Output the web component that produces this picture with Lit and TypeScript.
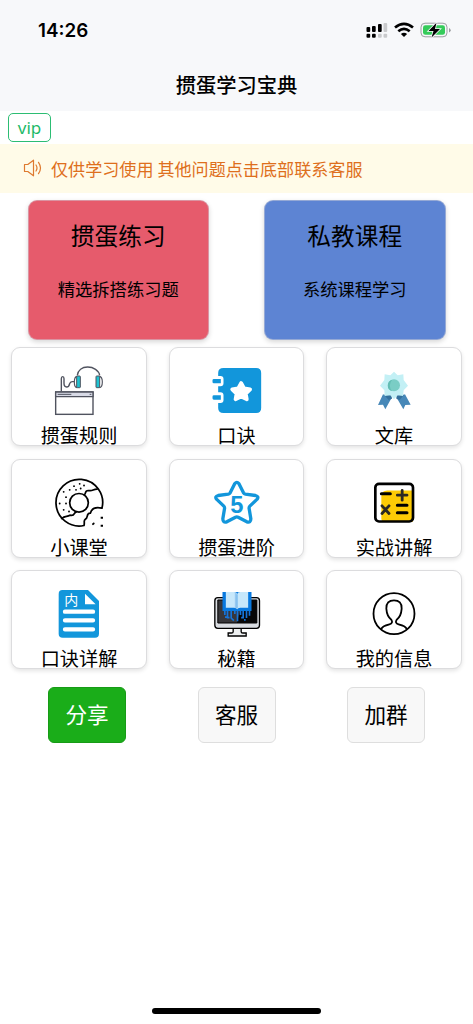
import { LitElement, html, svg, css } from "lit";
import { customElement } from "lit/decorators.js";

const rules = svg`<svg viewBox="153 66 168 168" fill="none" stroke="#50535f" stroke-width="4.2">
  <path d="M184 154V116q0-6 4-6t4 6v14q0 11 8 11 7 0 9-10 2-7 9-6h7"/>
  <path d="M232 106c2-15 14-25 31-25s34 10 36 25"/>
  <path fill="#fff" stroke-width="3.500" d="M231 109q-8 1-8 17t8 17M298 109q9 1 9 17t-9 17"/>
  <rect x="230" y="108" width="11" height="35" rx="2" fill="#1fc3d2" stroke-width="3"/>
  <rect x="288" y="108" width="11" height="35" rx="2" fill="#1fc3d2" stroke-width="3"/>
  <rect x="167" y="156" width="112" height="67" fill="#fff"/>
  <path fill="#d8dae6" d="M167 156h112v14H167z"/>
  <path stroke-width="3" d="M173 163h41M269 163h5"/></svg>`;

const notebook = svg`<svg viewBox="151.5 66 168 168">
  <path fill="#1296db" d="M195 84h98q15 0 15 15v105q0 15-15 15h-98q-16 0-16-15v-15h7q9 0 9-9v-14q0-9-9-9h-7v-18h7q9 0 9-9v-13q0-9-9-9h-7v-9q0-15 16-15z"/>
  <path fill="#1296db" d="M166 117h21v13h-21q-4 0-4-4v-5q0-4 4-4zM166 166h21v13h-21q-4 0-4-4v-5q0-4 4-4z"/>
  <path fill="#fff" stroke="#fff" stroke-width="11" stroke-linejoin="round" d="M248 129l9 16 18 3-13 13 3 17-17-8-17 8 3-17-13-13 18-3z"/></svg>`;

const medal = svg`<svg viewBox="153 66 168 168">
  <path fill="#4788b8" d="M204 163l26 10-19 35-7-14-15 1zM270 163l-25 10 20 35 6-13 16-1z"/>
  <path fill="#34719d" d="M207 164l22 2 2 10-10 4zM267 164l-22 2-1 10 10 4z"/>
  <path fill="#c3f0f5" d="M237 95l11 11 17-3 1 17 13 17-13 14-2 17-16-2-11 12-11-12-17 2-1-17-13-14 13-17 1-17 17 3z"/>
  <circle cx="237" cy="136" r="18" fill="#7acdc5"/>
  <path fill="#63bdb4" d="M232 119a18 18 0 0 0 0 35 24 24 0 0 1 0-35z"/></svg>`;

const donut = svg`<svg viewBox="153 64.500 168 168" fill="none" stroke="#000" stroke-width="5.200" stroke-linecap="round" stroke-linejoin="round">
  <path d="M306 167A70 70 0 1 0 252 219c3-13-3-13 5-20 8-3 1-18 14-17 4-14 15-20 35-15z"/>
  <circle cx="237" cy="151" r="28"/>
  <path d="M185 198c10-10 16-4 25-10 16 4 10-8 19-10M254 126c5-5-1-11 11-12 14 3 13-4 26-4"/>
  <path stroke-width="5.500" d="M222 101h.1M239 94h.1M252 99h.1M209 112h.1M228 112h.1M191 118h.1M198 134h.1M179 153h.1M198 153h.1M191 172h.1M207 177h.1M242 108h.1M279 215l2-2"/>
  <path stroke-width="6" stroke-linecap="butt" d="M302 196h7M302 220h7"/></svg>`;

const star = svg`<svg viewBox="625.500 64.500 168 168">
  <path fill="none" stroke="#1296db" stroke-width="10" stroke-linejoin="round" d="M703 93q6-7 12 0l14 28q2 3 6 4l30 4q11 3 5 11l-22 21q-3 3-2 8l5 30q0 13-12 9l-26-14q-4-2-8 0l-26 14q-12 4-12-9l5-30q1-5-2-8l-22-21q-6-8 5-11l30-4q4-1 6-4z"/>
  <text x="709" y="182" class="star-number">5</text></svg>`;

const calculator = svg`<svg viewBox="399 64.500 168 168">
  <path fill="#fdcb05" d="M445 132q0-18 18-18h77v94h-85q-10 0-10-10z"/>
  <rect x="427" y="94" width="113" height="113" rx="11" fill="none" stroke="#000" stroke-width="8"/>
  <path fill="none" stroke="#000" stroke-width="9" stroke-linecap="round" d="M445 124h27M493 158h29M493 181h29"/>
  <path fill="none" stroke="#2c2923" stroke-width="8.500" stroke-linecap="round" d="M493 128h29M507.500 114v29M447 160l21 23M468 160l-21 23"/></svg>`;

const sheet = svg`<svg viewBox="153 63 168 168">
  <path fill="#1296db" d="M187 78h77l33 33v98q0 12-12 12h-97q-12 0-12-12V90q0-12 11-12z"/>
  <path fill="#fff" d="M255 89l32 32h-32z"/>
  <path stroke="#fff" stroke-width="13" stroke-linecap="round" d="M195 143h84M195 169h84M195 196h84"/>
  <text x="214" y="124" class="sheet-glyph">内</text></svg>`;

const monitor = svg`<svg viewBox="625.500 63 168 168">
  <path fill="#eef0f1" stroke="#000" stroke-width="4" d="M698 191v12q0 4-5 4h-10v9h54v-9h-10q-5 0-5-4v-12z"/>
  <rect x="643" y="101" width="134" height="92" rx="9" fill="#dadde2" stroke="#000" stroke-width="4"/>
  <path fill="#38373a" stroke="#000" stroke-width="3" d="M652 108h117v69H652z"/>
  <path fill="#070707" d="M727 108h42v69h-60z"/>
  <path fill="none" stroke="#1674d8" stroke-width="5" d="M673 137v16M681 137v24h6M692 137v25l8 8M703 137v13M711 137v35M720 137v16M728 137v24h-6M738 137v25M747 137v18M676 157v5M733 165v5"/>
  <path fill="#0879df" d="M666 84h87v57h-87z"/>
  <path fill="#c7e8fb" d="M676 84h25q8 0 9 7 1-7 9-7h24v47h-24q-7 0-9 5-2-5-9-5h-25z"/>
  <path fill="#96c9f1" d="M703 85q6 2 7 7v44q-2-5-7-5z"/>
  <path fill="none" stroke="#58a8e9" stroke-width="2" d="M710 91v42"/></svg>`;

const person = svg`<svg viewBox="399 63 168 168" fill="none" stroke="#000" stroke-width="5.400" stroke-linecap="round" stroke-linejoin="round">
  <circle cx="483" cy="149" r="61.500"/>
  <path d="M445 195c2-8 12-11 24-14 9-2 10-8 6-14-11-8-14-18-15-33-1-17 8-25 23-25s24 8 23 25c-1 15-4 25-15 33-4 6-3 12 6 14 12 3 22 6 24 14"/></svg>`;

const TILES = [
  { label: "掼蛋规则", icon: rules },
  { label: "口诀", icon: notebook },
  { label: "文库", icon: medal },
  { label: "小课堂", icon: donut },
  { label: "掼蛋进阶", icon: star },
  { label: "实战讲解", icon: calculator },
  { label: "口诀详解", icon: sheet },
  { label: "秘籍", icon: monitor },
  { label: "我的信息", icon: person },
];

@customElement("app-root")
export class AppRoot extends LitElement {
  static styles = css`
    :host {
      display: flex;
      flex-direction: column;
      box-sizing: border-box;
      height: 1024px;
      background: #fff;
      color: #000;
      font-family: "Noto Sans CJK SC", sans-serif;
      overflow: hidden;
    }
    * { box-sizing: border-box; }
    svg { display: block; flex: none; }
    header { height: 110.500px; background: #f7f8fa; flex: none; }
    .status {
      height: 60px;
      padding: 0 22.500px 0 38px;
      display: flex;
      align-items: center;
      justify-content: space-between;
    }
    .time { font: 600 18.800px/24px Inter, sans-serif; padding-top: 1px; }
    .status-icons { width: 85px; height: 18px; }
    .title {
      margin: 0;
      height: 50px;
      font-size: 20.300px;
      font-weight: 500;
      line-height: 48px;
      text-align: center;
    }
    .toolbar { height: 33.500px; padding: 2.500px 8px; flex: none; }
    .vip {
      display: block;
      width: 43px;
      height: 29px;
      padding: 0;
      border: 1.500px solid #2cbd73;
      border-radius: 5px;
      background: #fff;
      color: #1dba69;
      font: 17px/26px "Noto Sans", sans-serif;
      text-align: center;
    }
    .notice {
      height: 48.500px;
      padding-left: 23px;
      display: flex;
      align-items: center;
      gap: 8px;
      background: #fffbe8;
      color: #de6f1c;
      font-size: 17.100px;
      white-space: nowrap;
      flex: none;
    }
    .notice svg { width: 20px; height: 20px; }
    .heroes {
      display: flex;
      justify-content: space-between;
      padding: 7px 27.500px 0;
      flex: none;
    }
    .hero {
      width: 181.500px;
      height: 140.500px;
      padding-top: 17px;
      border-radius: 9px;
      border: 1px solid rgba(205, 205, 215, 0.500);
      box-shadow: 0 2px 5px rgba(0, 0, 0, 0.160);
      text-align: center;
    }
    .red { background: #e65b6c; }
    .blue { background: #5d84d3; }
    .hero-name { font-size: 23.700px; line-height: 34px; }
    .hero-note { font-size: 17.300px; line-height: 26px; margin-top: 24px; }
    .grid {
      display: grid;
      grid-template-columns: repeat(3, 135.500px);
      grid-auto-rows: 99px;
      justify-content: space-between;
      row-gap: 12.500px;
      padding: 7px 11.250px 0;
      flex: none;
    }
    .tile {
      display: flex;
      flex-direction: column;
      align-items: center;
      padding-top: 14px;
      border: 1px solid #dcdcde;
      border-radius: 9px;
      background: #fff;
      box-shadow: 0 2px 4px rgba(0, 0, 0, 0.110);
      overflow: hidden;
    }
    .tile svg { width: 56px; height: 56px; }
    .label {
      margin-top: 4px;
      font-size: 19.200px;
      line-height: 27px;
      white-space: nowrap;
      flex: none;
    }
    .star-number { font: 700 71px "Liberation Sans", sans-serif; fill: #1296db; text-anchor: middle; }
    .sheet-glyph { font: 42px "Noto Sans CJK SC", sans-serif; fill: #fff; text-anchor: middle; }
    .actions {
      display: flex;
      justify-content: space-between;
      padding: 17.500px 48px 0;
      flex: none;
    }
    .action {
      width: 78px;
      height: 56px;
      padding: 0 0 2px;
      border: 1px solid #dedede;
      border-radius: 6px;
      background: #f8f8f8;
      color: #000;
      font: 21.600px/52px "Noto Sans CJK SC", sans-serif;
      text-align: center;
    }
    .primary { background: #1aad19; border-color: #179b16; color: #fff; }
    .home { width: 169px; height: 6px; margin: auto auto 10px; border-radius: 3px; background: #000; flex: none; }
  `;

  render() {
    return html`
      <header>
        <div class="status">
          <span class="time">14:26</span>
          <svg class="status-icons" viewBox="0 0 85 18">
            <g fill="#000">
              <rect x=".5" y="6" width="3.700" height="5" rx="1"/><rect x="6" y="5" width="3.700" height="6" rx="1"/>
              <rect x="12" y="3" width="3.700" height="8" rx="1"/>
              <rect x=".5" y="12.700" width="3.700" height="4" rx="1"/><rect x="6" y="12.700" width="3.700" height="4" rx="1"/>
            </g>
            <g fill="#c9cacc">
              <rect x="17.500" y="2" width="3.700" height="9" rx="1"/>
              <rect x="12" y="12.700" width="3.700" height="4" rx="1"/><rect x="17.500" y="12.700" width="3.700" height="4" rx="1"/>
            </g>
            <g fill="none" stroke="#000" stroke-width="2.700">
              <path d="M29 6.500q9-7.400 18 0M32.300 10.200q5.700-4.700 11.400 0"/>
            </g>
            <path d="M34.900 12.900q3.100-2.300 6.200 0L38 16z"/>
            <rect x="55" y="2.200" width="26" height="13.600" rx="4" fill="none" stroke="#9b9da0"/>
            <rect x="57" y="4.200" width="22" height="9.600" rx="2.300" fill="#35cb5a"/>
            <path d="M83 7v4.500q1.700-.7 1.700-2.250T83 7z" fill="#9b9da0"/>
            <path d="M70.500 1.800L62.500 10h5l-2 6.500 8.500-8.400h-5z" fill="#000" stroke="#f7f8fa" stroke-width="1.600" paint-order="stroke"/>
          </svg>
        </div>
        <h1 class="title">掼蛋学习宝典</h1>
      </header>
      <div class="toolbar"><button class="vip">vip</button></div>
      <div class="notice">
        <svg viewBox="0 0 20 20" fill="none" stroke="#de7a30" stroke-width="1.200" stroke-linejoin="round" stroke-linecap="round">
          <path d="M1.500 6.500h3.300l5.700-4.300v15.600l-5.700-4.300H1.500zM13 7q2 3 0 6M15.500 4.300q4 5.700 0 11.400"/>
        </svg>
        <span>仅供学习使用 其他问题点击底部联系客服</span>
      </div>
      <section class="heroes">
        <div class="hero red">
          <div class="hero-name">掼蛋练习</div>
          <div class="hero-note">精选拆搭练习题</div>
        </div>
        <div class="hero blue">
          <div class="hero-name">私教课程</div>
          <div class="hero-note">系统课程学习</div>
        </div>
      </section>
      <section class="grid">
        ${TILES.map((t) => html`<div class="tile">${t.icon}<div class="label">${t.label}</div></div>`)}
      </section>
      <div class="actions">
        <button class="action primary">分享</button>
        <button class="action">客服</button>
        <button class="action">加群</button>
      </div>
      <div class="home"></div>
    `;
  }
}
